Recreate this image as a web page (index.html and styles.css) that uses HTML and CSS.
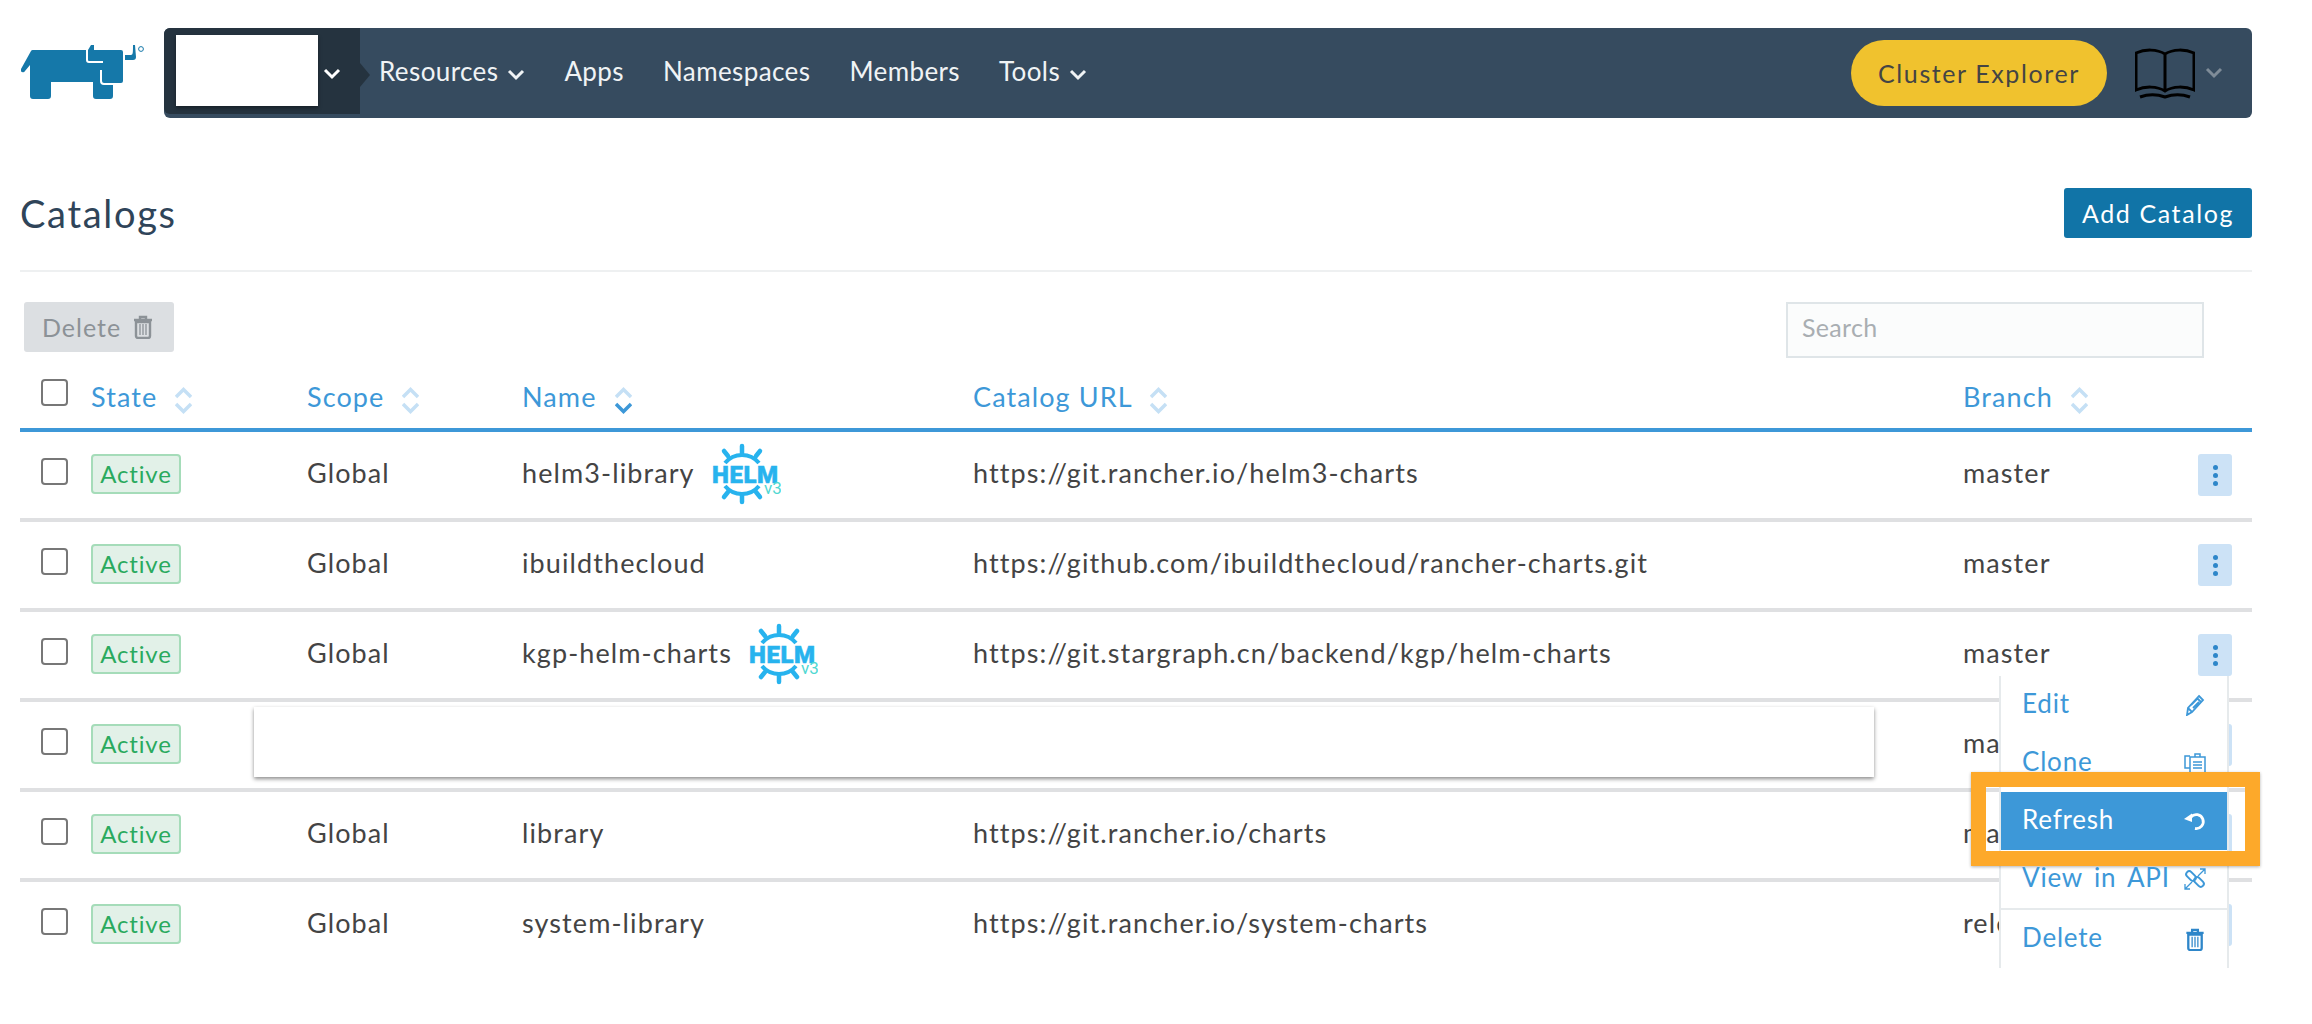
FILE: index.html

```html
<!DOCTYPE html>
<html lang="en">
<head>
  <meta charset="UTF-8">
  <title>Catalogs</title>
  <link rel="stylesheet" href="styles.css">
</head>
<body>
  <svg class="defs" width="0" height="0">
    <symbol id="chev" viewBox="0 0 18 12"><path d="M2 2l7 7 7-7" fill="none" stroke="currentColor" stroke-width="3"/></symbol>
    <symbol id="trash" viewBox="0 0 20 24">
      <path d="M1 5h18M7 4V2h6v2" fill="none" stroke="currentColor" stroke-width="2.4"/>
      <path d="M3 7h14v14a2 2 0 0 1-2 2H5a2 2 0 0 1-2-2z" fill="none" stroke="currentColor" stroke-width="2.4"/>
      <path d="M7 9v11M10 9v11M13 9v11" stroke="currentColor" stroke-width="1.3"/>
    </symbol>
    <symbol id="wheel" viewBox="0 0 69 62">
      <g fill="none" stroke="#27b3ee" stroke-width="4">
        <path d="M13 20a22 22 0 0 1 34 0"/>
        <path d="M13 43a22 22 0 0 0 34 0"/>
      </g>
      <g fill="none" stroke="#27b3ee" stroke-width="4.500" stroke-linecap="round">
        <path d="M30 3v7M12 8l4 5M48 8l-4 5M30 59v-7M12 54l4-5M48 54l-4-5"/>
      </g>
    </symbol>
  </svg>

  <header class="top">
    <svg class="logo" viewBox="0 0 125 56" width="125" height="56">
      <path fill="#1578a9" d="M0 24L10 6a2 2 0 0 1 2-1H67L70 0h3V5h27a2 2 0 0 1 2 2v29a2 2 0 0 1-2 2h-8v13a3 3 0 0 1-3 3H75a3 3 0 0 1-3-3V37H30v14a3 3 0 0 1-3 3H12a3 3 0 0 1-3-3V20l-5 6a2 2 0 0 1-4-2z"/>
      <path fill="none" stroke="#fff" stroke-width="2" d="M66 5v10a2 2 0 0 0 2 2h14M80 25v11a3 3 0 0 0 3 3h10"/>
      <path fill="#1578a9" d="M104 10h6c2 0 2-3 2-10h2l1 12a3 3 0 0 1-3 3h-8z"/>
      <circle cx="120" cy="4" r="2.4" fill="none" stroke="#1578a9"/>
    </svg>
    <nav class="nav">
      <div class="cluster">
        <div class="cluster-box"></div>
        <svg class="chev chev-white"><use href="#chev"/></svg>
      </div>
      <a class="nav-link">Resources <svg class="chev"><use href="#chev"/></svg></a>
      <a class="nav-link">Apps</a>
      <a class="nav-link">Namespaces</a>
      <a class="nav-link">Members</a>
      <a class="nav-link">Tools <svg class="chev"><use href="#chev"/></svg></a>
      <div class="nav-right">
        <a class="explorer">Cluster Explorer</a>
        <svg class="book" viewBox="0 0 60 52" width="60" height="52" fill="none" stroke="#000" stroke-width="3">
          <path d="M30 7C22 2 10 2 1 6v37c9-4 21-4 29 1 8-5 20-5 29-1V6C50 2 38 2 30 7zM30 7v37"/>
          <path d="M5 50c8-3 17-3 25 0 8-3 17-3 25 0"/>
        </svg>
        <svg class="chev chev-grey"><use href="#chev"/></svg>
      </div>
    </nav>
  </header>

  <main class="page">
    <div class="title-row">
      <h1>Catalogs</h1>
      <button class="btn-add">Add Catalog</button>
    </div>

    <div class="toolbar">
      <button class="btn-delete">Delete <svg class="ico-trash"><use href="#trash"/></svg></button>
      <input class="search" type="text" placeholder="Search">
    </div>

    <div class="table-wrap">
      <table>
        <thead>
          <tr>
            <th class="col-check"><span class="check"></span></th>
            <th class="col-state">State <svg class="sort" viewBox="0 0 17 27"><path d="M1 10l7.500-7.500L16 10M1 17l7.500 7.500L16 17"/></svg></th>
            <th class="col-scope">Scope <svg class="sort" viewBox="0 0 17 27"><path d="M1 10l7.500-7.500L16 10M1 17l7.500 7.500L16 17"/></svg></th>
            <th class="col-name">Name <svg class="sort" viewBox="0 0 17 27"><path d="M1 10l7.500-7.500L16 10"/><path class="sort-on" d="M1 17l7.500 7.500L16 17"/></svg></th>
            <th class="col-url">Catalog URL <svg class="sort" viewBox="0 0 17 27"><path d="M1 10l7.500-7.500L16 10M1 17l7.500 7.500L16 17"/></svg></th>
            <th class="col-branch">Branch <svg class="sort" viewBox="0 0 17 27"><path d="M1 10l7.500-7.500L16 10M1 17l7.500 7.500L16 17"/></svg></th>
          </tr>
        </thead>
        <tbody>
          <tr>
            <td><span class="check"></span></td>
            <td><span class="badge">Active</span></td>
            <td>Global</td>
            <td>
              <span class="name-cell">helm3-library
                <svg class="helm" viewBox="0 0 69 62"><use href="#wheel"/><text class="helm-word" x="0" y="40">HELM</text><text class="helm-ver" x="52" y="51">v3</text></svg>
              </span>
            </td>
            <td>https://git.rancher.io/helm3-charts</td>
            <td><div class="branch-cell">master<button class="more"><i></i><i></i><i></i></button></div></td>
          </tr>
          <tr>
            <td><span class="check"></span></td>
            <td><span class="badge">Active</span></td>
            <td>Global</td>
            <td>ibuildthecloud</td>
            <td>https://github.com/ibuildthecloud/rancher-charts.git</td>
            <td><div class="branch-cell">master<button class="more"><i></i><i></i><i></i></button></div></td>
          </tr>
          <tr>
            <td><span class="check"></span></td>
            <td><span class="badge">Active</span></td>
            <td>Global</td>
            <td>
              <span class="name-cell">kgp-helm-charts
                <svg class="helm" viewBox="0 0 69 62"><use href="#wheel"/><text class="helm-word" x="0" y="40">HELM</text><text class="helm-ver" x="52" y="51">v3</text></svg>
              </span>
            </td>
            <td>https://git.stargraph.cn/backend/kgp/helm-charts</td>
            <td>
              <div class="branch-cell">master
                <div class="more-wrap">
                  <button class="more"><i></i><i></i><i></i></button>
                  <ul class="menu">
                    <li class="menu-item">Edit
                      <svg class="mi" viewBox="0 0 20 22" fill="none" stroke="currentColor" stroke-width="1.800"><path d="M14 2l4 4L7 18l-5 3 1-7zM12 4l4 4M3 14l4 4M6 11l6-6M8 14l6-6"/></svg>
                    </li>
                    <li class="menu-item">Clone
                      <svg class="mi" viewBox="0 0 22 22" fill="none" stroke="currentColor" stroke-width="1.500"><path d="M6 4H1v12h5"/><path d="M6 5h15v16H6zM11 5V2h5v3M9 10h9M9 13h9M9 16h9"/></svg>
                    </li>
                    <li class="menu-item menu-active">Refresh
                      <svg class="mi" viewBox="0 0 22 18" fill="none" stroke="currentColor" stroke-width="2.800"><path d="M7 5a7 7 0 1 1 4 11.500"/><path d="M0 7l8-5.500V10z" fill="currentColor" stroke="none"/></svg>
                    </li>
                    <li class="menu-item">View in API
                      <svg class="mi" viewBox="0 0 22 22" fill="none" stroke="currentColor" stroke-width="2"><rect x="1.500" y="5" width="11" height="6" rx="3" transform="rotate(45 7 8)"/><rect x="9.500" y="11" width="11" height="6" rx="3" transform="rotate(45 15 14)"/><path stroke-width="1.300" d="M14 8l7-7M16 1h5v5M8 14l-7 7M1 16v5h5"/></svg>
                    </li>
                    <li class="menu-item menu-sep">Delete
                      <svg class="mi mi-trash"><use href="#trash"/></svg>
                    </li>
                  </ul>
                </div>
              </div>
            </td>
          </tr>
          <tr>
            <td><span class="check"></span></td>
            <td><span class="badge">Active</span></td>
            <td></td>
            <td></td>
            <td></td>
            <td><div class="branch-cell">master<button class="more"><i></i><i></i><i></i></button></div></td>
          </tr>
          <tr>
            <td><span class="check"></span></td>
            <td><span class="badge">Active</span></td>
            <td>Global</td>
            <td>library</td>
            <td>https://git.rancher.io/charts</td>
            <td><div class="branch-cell">master<button class="more"><i></i><i></i><i></i></button></div></td>
          </tr>
          <tr>
            <td><span class="check"></span></td>
            <td><span class="badge">Active</span></td>
            <td>Global</td>
            <td>system-library</td>
            <td>https://git.rancher.io/system-charts</td>
            <td><div class="branch-cell">release<button class="more"><i></i><i></i><i></i></button></div></td>
          </tr>
        </tbody>
      </table>
      <div class="patch"></div>
    </div>
  </main>
</body>
</html>
```

FILE: styles.css

```css
html, body {
  margin: 0;
  background: #fff;
}
body {
  font-family: "Lato", "Liberation Sans", sans-serif;
  font-size: 27px;
  letter-spacing: 1.1px;
  color: #444;
}
.defs {
  position: absolute;
}

/* top bar */
.top {
  display: flex;
  align-items: center;
  padding: 28px 60px 0 21px;
}
.logo {
  flex: none;
  margin-right: 18px;
}
.nav {
  flex: 1;
  display: flex;
  align-items: center;
  height: 90px;
  background: #364b5f;
  border-radius: 6px;
  color: #f0f3f5;
  font-size: 26px;
  letter-spacing: .4px;
}
.cluster {
  position: relative;
  align-self: flex-start;
  display: flex;
  align-items: center;
  gap: 3px;
  box-sizing: border-box;
  width: 196px;
  height: 86px;
  padding: 7px 0 8px 12px;
  margin-right: 19px;
  background: #25333f;
  border-radius: 6px 0 0 6px;
}
.cluster::after {
  content: "";
  position: absolute;
  right: -10px;
  top: 35px;
  border-left: 10px solid #25333f;
  border-top: 12px solid transparent;
  border-bottom: 12px solid transparent;
}
.cluster-box {
  width: 142px;
  height: 71px;
  background: #fff;
  box-shadow: 0 2px 4px rgba(0, 0, 0, .4);
}
.chev {
  width: 18px;
  height: 12px;
  margin-left: 2px;
}
.chev-white {
  margin-top: 6px;
  color: #fff;
}
.chev-grey {
  color: #7f8c98;
  margin-left: 10px;
}
.nav-link {
  margin-right: 39px;
  padding-bottom: 5px;
  white-space: nowrap;
}
.nav-right {
  margin-left: auto;
  display: flex;
  align-items: center;
  padding-right: 29px;
}
.explorer {
  box-sizing: border-box;
  width: 256px;
  height: 66px;
  line-height: 66px;
  margin-right: 28px;
  text-align: center;
  background: #f0c22e;
  border-radius: 33px;
  color: #444;
  font-size: 25px;
  letter-spacing: 1.6px;
}

/* page */
.page {
  padding: 70px 60px 0 20px;
}
.title-row {
  display: flex;
  justify-content: space-between;
  align-items: center;
  padding-bottom: 32px;
  border-bottom: 2px solid #eef0f1;
}
h1 {
  margin: 0;
  font-size: 38px;
  font-weight: 400;
  letter-spacing: 1.7px;
  color: #2f4459;
}
.btn-add {
  width: 188px;
  height: 50px;
  border: 0;
  border-radius: 3px;
  background: #1174a7;
  color: #fff;
  font: inherit;
  font-size: 25px;
  letter-spacing: 1.6px;
}
.toolbar {
  display: flex;
  justify-content: space-between;
  align-items: flex-start;
  margin-top: 30px;
  padding: 0 48px 0 4px;
}
.btn-delete {
  display: flex;
  align-items: center;
  gap: 12px;
  height: 50px;
  width: 150px;
  padding: 0 0 0 18px;
  border: 0;
  border-radius: 3px;
  background: #dcdfe2;
  color: #8c9297;
  font: inherit;
  font-size: 25px;
  letter-spacing: 1px;
}
.ico-trash {
  width: 20px;
  height: 24px;
}
.search {
  box-sizing: border-box;
  width: 418px;
  height: 56px;
  padding: 0 14px 7px;
  margin: 0;
  border: 2px solid #dfe5e8;
  outline: 0;
  background: #fbfcfc;
  font: inherit;
  font-size: 25px;
  letter-spacing: .3px;
}
.search::placeholder {
  color: #a9aeb2;
}

/* table */
.table-wrap {
  position: relative;
}
table {
  width: 100%;
  table-layout: fixed;
  border-collapse: separate;
  border-spacing: 0;
}
th {
  height: 62px;
  padding: 8px 0 0;
  text-align: left;
  font-weight: 400;
  color: #3d98d8;
  border-bottom: 4px solid #3d98d8;
  white-space: nowrap;
}
th .check {
  margin-top: -10px;
}
.col-check { width: 71px; }
.col-state { width: 216px; }
.col-scope { width: 215px; }
.col-name { width: 451px; }
.col-url { width: 990px; }
td {
  height: 81px;
  padding: 0 0 5px;
  border-bottom: 4px solid #dfe0e2;
}
tbody tr:last-child td {
  border-bottom: 0;
}
.check {
  display: block;
  box-sizing: border-box;
  width: 27px;
  height: 27px;
  margin: -3px 0 0 21px;
  border: 2px solid #777;
  border-radius: 4px;
  background: #fff;
}
.sort {
  width: 17px;
  height: 27px;
  margin-left: 10px;
  vertical-align: middle;
  fill: none;
  stroke: #c5e0f5;
  stroke-width: 3.500;
}
.sort-on {
  stroke: #3d98d8;
}
.badge {
  display: inline-block;
  box-sizing: border-box;
  width: 90px;
  height: 40px;
  line-height: 36px;
  margin-top: 3px;
  text-align: center;
  font-size: 24px;
  letter-spacing: .8px;
  color: #2aaa5e;
  background: #e2f1e8;
  border: 2px solid #a5dcb9;
  border-radius: 4px;
}
.name-cell {
  display: flex;
  align-items: center;
  gap: 17px;
}
.helm {
  width: 69px;
  height: 62px;
  flex: none;
  margin-top: 3px;
}
.helm-word {
  font: 900 24px "Roboto", sans-serif;
  letter-spacing: .6px;
  fill: #27b3ee;
  stroke: #27b3ee;
  stroke-width: .5px;
}
.helm-ver {
  font: 400 17px "Roboto", sans-serif;
  letter-spacing: 0;
  fill: #4fd8d2;
}
.branch-cell {
  display: flex;
  align-items: center;
  justify-content: space-between;
  padding-right: 20px;
}
.more-wrap {
  position: relative;
  display: flex;
}
.more {
  display: flex;
  flex-direction: column;
  align-items: center;
  justify-content: center;
  gap: 3px;
  width: 34px;
  height: 42px;
  padding: 0;
  margin-top: 5px;
  border: 0;
  border-radius: 3px;
  background: #cce2f6;
}
.more i {
  width: 5px;
  height: 5px;
  border-radius: 50%;
  background: #2e86c9;
}

/* actions menu */
.menu {
  position: absolute;
  z-index: 2;
  top: 100%;
  right: 3px;
  box-sizing: border-box;
  width: 230px;
  margin: 0;
  padding: 0;
  list-style: none;
  background: #fff;
  border: 2px solid #e6eaec;
  border-top: 0;
  color: #3d98d8;
}
.menu-item {
  position: relative;
  display: flex;
  align-items: center;
  justify-content: space-between;
  box-sizing: border-box;
  height: 58px;
  padding: 0 21px 5px;
  font-size: 26px;
  white-space: nowrap;
  letter-spacing: .8px;
  word-spacing: 4px;
}
.menu-active {
  background: #3d98d8;
  color: #fff;
}
.menu-active::after {
  content: "";
  position: absolute;
  left: -30px;
  right: -33px;
  top: -20px;
  bottom: -16px;
  border: 15px solid #fda92a;
  box-shadow: 0 1px 3px rgba(0, 0, 0, .3);
}
.menu-sep {
  height: 60px;
  border-top: 2px solid #e6eaec;
}
.mi {
  width: 22px;
  height: 22px;
  flex: none;
  margin-top: 5px;
}
.mi-trash {
  color: #2e86c9;
  height: 23px;
}

/* blank panel over the fourth row */
.patch {
  position: absolute;
  left: 234px;
  top: 349px;
  width: 1620px;
  height: 70px;
  background: #fff;
  box-shadow: 0 2px 4px rgba(0, 0, 0, .45);
}
```
